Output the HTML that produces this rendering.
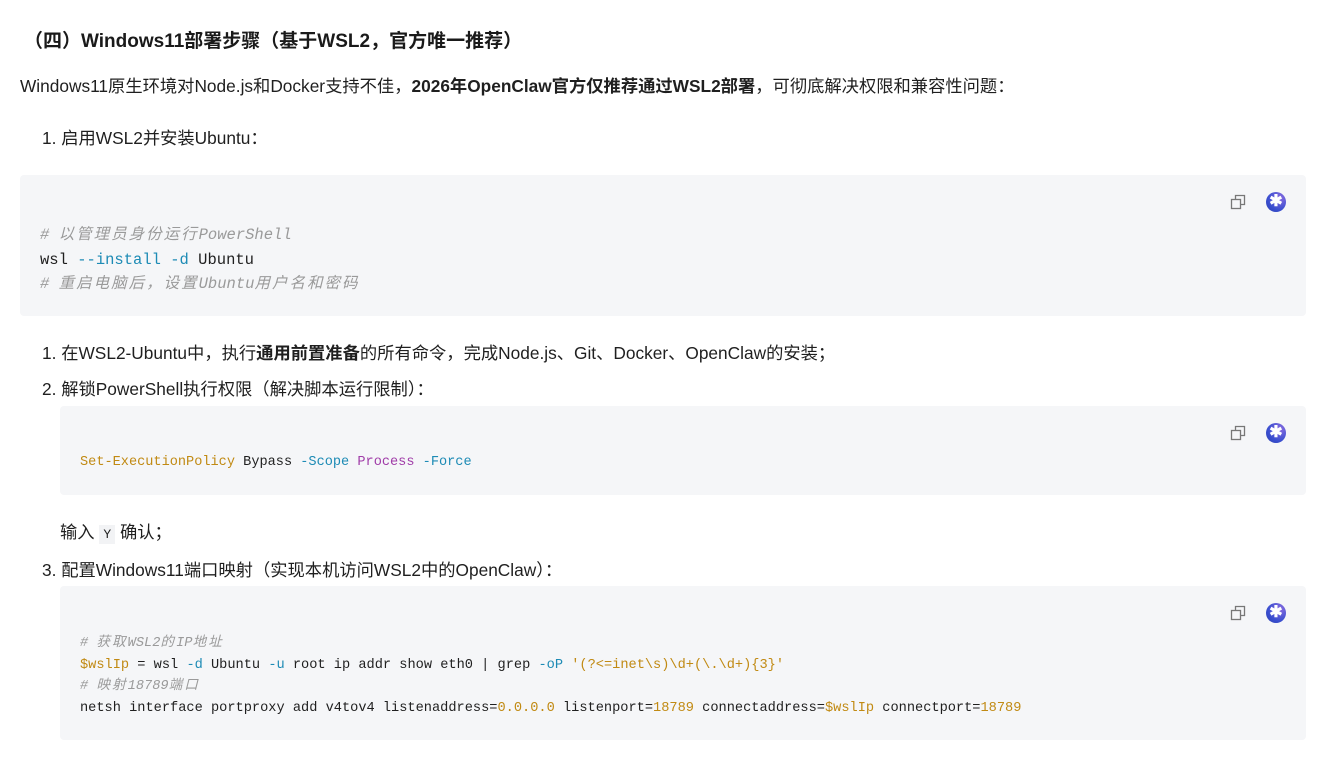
<!DOCTYPE html>
<html><head><meta charset="utf-8"><style>
*{margin:0;padding:0;box-sizing:border-box}
body{width:1341px;height:759px;background:#fff;position:relative;overflow:hidden;font-family:"Liberation Sans","Noto Sans CJK SC",sans-serif;color:#1f1f1f;font-size:17.3px}
.a{position:absolute;white-space:pre;line-height:22px}
.blk{position:absolute;background:#f5f6f8;border-radius:4px}
.code{position:absolute;font-family:"Liberation Mono","Noto Sans CJK SC",monospace;white-space:pre;color:#1f1f1f}
.c{color:#9a9a9a;font-style:italic}
.w{letter-spacing:2px}
.k{color:#1d8bb5}
.y{color:#c18a13}
.p{color:#a03ca8}
.icons{position:absolute;width:70px;height:24px}
.cp{position:absolute;left:0;top:4px;width:16px;height:16px}
.ai{position:absolute;left:36px;top:2px;width:20px;height:20px;border-radius:50%;background:radial-gradient(circle at 70% 30%,#8a6ce0,#3a4fd0 60%,#2b3fb0);color:#fff;font-size:16px;line-height:20px;text-align:center;font-weight:bold}
b{font-weight:bold}
</style></head><body>
<div class="a" style="left:24px;top:31px;font-size:19px;font-weight:bold;color:#1a1a1a">（四）Windows11部署步骤（基于WSL2，官方唯一推荐）</div>
<div class="a" style="left:20px;top:75px">Windows11原生环境对Node.js和Docker支持不佳，<b>2026年OpenClaw官方仅推荐通过WSL2部署</b>，可彻底解决权限和兼容性问题：</div>
<div class="a" style="left:42px;top:127px">1. 启用WSL2并安装Ubuntu：</div>

<div class="blk" style="left:20px;top:175px;width:1286px;height:141px"></div>
<div class="icons" style="left:1230px;top:190px"><svg class="cp" viewBox="0 0 16 16"><rect x="1.5" y="5.5" width="9" height="9" fill="none" stroke="#777" stroke-width="1.3"/><path d="M5.5 5.5V1.5h9v9h-4" fill="none" stroke="#777" stroke-width="1.3"/></svg><div class="ai">✱</div></div>
<div class="code" style="left:40px;top:223px;font-size:15.5px;line-height:24.5px"><span class="c"># <span class="w">以管理员身份运行</span>PowerShell</span>
wsl <span class="k">--install</span> <span class="k">-d</span> Ubuntu
<span class="c"># <span class="w">重启电脑后，设置</span>Ubuntu<span class="w">用户名和密码</span></span></div>

<div class="a" style="left:42px;top:342px">1. 在WSL2-Ubuntu中，执行<b>通用前置准备</b>的所有命令，完成Node.js、Git、Docker、OpenClaw的安装；</div>
<div class="a" style="left:42px;top:378px">2. 解锁PowerShell执行权限（解决脚本运行限制）：</div>

<div class="blk" style="left:60px;top:406px;width:1246px;height:89px"></div>
<div class="icons" style="left:1230px;top:421px"><svg class="cp" viewBox="0 0 16 16"><rect x="1.5" y="5.5" width="9" height="9" fill="none" stroke="#777" stroke-width="1.3"/><path d="M5.5 5.5V1.5h9v9h-4" fill="none" stroke="#777" stroke-width="1.3"/></svg><div class="ai">✱</div></div>
<div class="code" style="left:80px;top:454px;font-size:13.6px;line-height:18px"><span class="y">Set-ExecutionPolicy</span> Bypass <span class="k">-Scope</span> <span class="p">Process</span> <span class="k">-Force</span></div>

<div class="a" style="left:60px;top:521px">输入 <span style="font-family:'Liberation Mono',monospace;font-size:13px;background:#f2f3f5;padding:2px 4px">Y</span> 确认；</div>
<div class="a" style="left:42px;top:559px">3. 配置Windows11端口映射（实现本机访问WSL2中的OpenClaw）：</div>

<div class="blk" style="left:60px;top:586px;width:1246px;height:154px"></div>
<div class="icons" style="left:1230px;top:601px"><svg class="cp" viewBox="0 0 16 16"><rect x="1.5" y="5.5" width="9" height="9" fill="none" stroke="#777" stroke-width="1.3"/><path d="M5.5 5.5V1.5h9v9h-4" fill="none" stroke="#777" stroke-width="1.3"/></svg><div class="ai">✱</div></div>
<div class="code" style="left:80px;top:633px;font-size:13.65px;line-height:21.7px"><span class="c"># <span class="w">获取</span>WSL2<span class="w">的</span>IP<span class="w">地址</span></span>
<span class="y">$wslIp</span> = wsl <span class="k">-d</span> Ubuntu <span class="k">-u</span> root ip addr show eth0 | grep <span class="k">-oP</span> <span class="y">'(?&lt;=inet\s)\d+(\.\d+){3}'</span>
<span class="c"># <span class="w">映射</span>18789<span class="w">端口</span></span>
netsh interface portproxy add v4tov4 listenaddress=<span class="y">0.0.0.0</span> listenport=<span class="y">18789</span> connectaddress=<span class="y">$wslIp</span> connectport=<span class="y">18789</span></div>
</body></html>
